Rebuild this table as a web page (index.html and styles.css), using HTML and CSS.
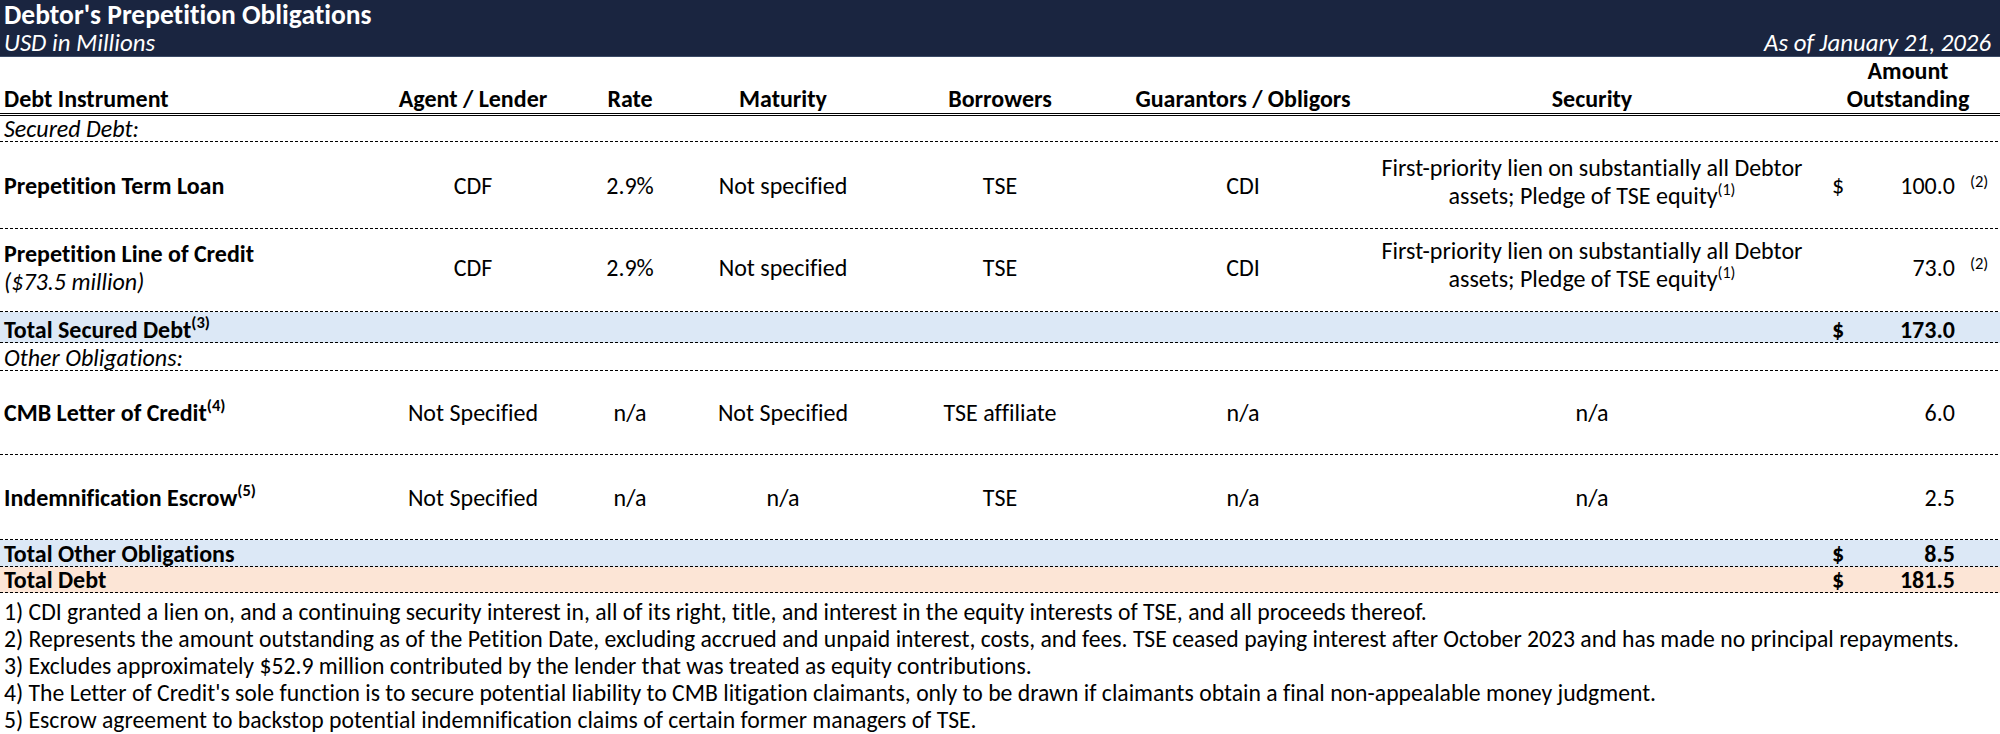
FILE: index.html
```html
<!DOCTYPE html>
<html lang="en">
<head>
<meta charset="utf-8">
<title>Debtor's Prepetition Obligations</title>
<link rel="stylesheet" href="styles.css">
</head>
<body>
<div class="sheet">
  <header class="banner">
    <div class="banner-title">Debtor's Prepetition Obligations</div>
    <div class="banner-sub">
      <span>USD in Millions</span>
      <span>As of January 21, 2026</span>
    </div>
  </header>

  <table class="debt">
    <colgroup>
      <col class="w-name">
      <col class="w-agent">
      <col class="w-rate">
      <col class="w-maturity">
      <col class="w-borrow">
      <col class="w-guar">
      <col class="w-sec">
      <col class="w-cur">
      <col class="w-amt">
      <col class="w-note">
    </colgroup>
    <thead>
      <tr class="row-head">
        <th class="name">Debt Instrument</th>
        <th>Agent / Lender</th>
        <th>Rate</th>
        <th>Maturity</th>
        <th>Borrowers</th>
        <th>Guarantors / Obligors</th>
        <th>Security</th>
        <th colspan="3">Amount<br>Outstanding</th>
      </tr>
    </thead>
    <tbody>
      <tr class="row-label row-label-a">
        <td colspan="10" class="name label">Secured Debt:</td>
      </tr>
      <tr class="row-item row-tall-a">
        <td class="name strong">Prepetition Term Loan</td>
        <td>CDF</td>
        <td>2.9%</td>
        <td>Not specified</td>
        <td>TSE</td>
        <td>CDI</td>
        <td class="security">First-priority lien on substantially all Debtor<br>assets; Pledge of TSE equity<sup class="fn">(1)</sup></td>
        <td class="cur">$</td>
        <td class="amt">100.0</td>
        <td class="note"><sup class="fn">(2)</sup></td>
      </tr>
      <tr class="row-item row-tall-b">
        <td class="name two-line"><span class="strong">Prepetition Line of Credit</span><br><span class="label">($73.5 million)</span></td>
        <td>CDF</td>
        <td>2.9%</td>
        <td>Not specified</td>
        <td>TSE</td>
        <td>CDI</td>
        <td class="security">First-priority lien on substantially all Debtor<br>assets; Pledge of TSE equity<sup class="fn">(1)</sup></td>
        <td class="cur"></td>
        <td class="amt">73.0</td>
        <td class="note"><sup class="fn">(2)</sup></td>
      </tr>
      <tr class="row-total row-total-secured">
        <td colspan="7" class="name strong">Total Secured Debt<sup class="fn fn-bold">(3)</sup></td>
        <td class="cur strong">$</td>
        <td class="amt strong">173.0</td>
        <td class="note"></td>
      </tr>
      <tr class="row-label row-label-b">
        <td colspan="10" class="name label">Other Obligations:</td>
      </tr>
      <tr class="row-item row-mid-a">
        <td class="name strong">CMB Letter of Credit<sup class="fn fn-bold">(4)</sup></td>
        <td>Not Specified</td>
        <td>n/a</td>
        <td>Not Specified</td>
        <td>TSE affiliate</td>
        <td>n/a</td>
        <td>n/a</td>
        <td class="cur"></td>
        <td class="amt">6.0</td>
        <td class="note"></td>
      </tr>
      <tr class="row-item row-mid-b">
        <td class="name strong">Indemnification Escrow<sup class="fn fn-bold">(5)</sup></td>
        <td>Not Specified</td>
        <td>n/a</td>
        <td>n/a</td>
        <td>TSE</td>
        <td>n/a</td>
        <td>n/a</td>
        <td class="cur"></td>
        <td class="amt">2.5</td>
        <td class="note"></td>
      </tr>
      <tr class="row-total row-total-other">
        <td colspan="7" class="name strong">Total Other Obligations</td>
        <td class="cur strong">$</td>
        <td class="amt strong">8.5</td>
        <td class="note"></td>
      </tr>
      <tr class="row-total row-total-debt">
        <td colspan="7" class="name strong">Total Debt</td>
        <td class="cur strong">$</td>
        <td class="amt strong">181.5</td>
        <td class="note"></td>
      </tr>
    </tbody>
  </table>

  <div class="notes">
    <p>1) CDI granted a lien on, and a continuing security interest in, all of its right, title, and interest in the equity interests of TSE, and all proceeds thereof.</p>
    <p>2) Represents the amount outstanding as of the Petition Date, excluding accrued and unpaid interest, costs, and fees. TSE ceased paying interest after October 2023 and has made no principal repayments.</p>
    <p>3) Excludes approximately $52.9 million contributed by the lender that was treated as equity contributions.</p>
    <p>4) The Letter of Credit's sole function is to secure potential liability to CMB litigation claimants, only to be drawn if claimants obtain a final non-appealable money judgment.</p>
    <p>5) Escrow agreement to backstop potential indemnification claims of certain former managers of TSE.</p>
  </div>
</div>
</body>
</html>
```

FILE: styles.css
```css
:root {
  --navy: #1a2540;
  --blue: #dce8f6;
  --peach: #fce5d6;
  --dash: linear-gradient(90deg, #000 0 3px, transparent 3px 5px);
  --base: 24px;
}

* { box-sizing: border-box; }

html, body {
  margin: 0;
  padding: 0;
}

body {
  width: 2000px;
  height: 734px;
  overflow: hidden;
  background: #fff;
  color: #000;
  font-family: Carlito, Calibri, Lato, "Liberation Sans", sans-serif;
  font-size: var(--base);
  font-variant-ligatures: none;
}

.sheet {
  width: 2000px;
}

/* Banner */
.banner {
  height: 57px;
  background: var(--navy);
  color: #fff;
  padding: 0 9px 0 4px;
  display: flex;
  flex-direction: column;
  border-bottom: 1px solid #3b4a66;
}

.banner-title {
  font-weight: 700;
  font-size: 27.5px;
  line-height: 29px;
}

.banner-sub {
  display: flex;
  justify-content: space-between;
  align-items: baseline;
  font-style: italic;
  font-size: 24.8px;
  line-height: 27px;
}

/* Table */
table.debt {
  width: 2000px;
  border-collapse: collapse;
  border-spacing: 0;
  table-layout: fixed;
}

.w-name { width: 370px; }
.w-agent { width: 206px; }
.w-rate { width: 108px; }
.w-maturity { width: 198px; }
.w-borrow { width: 236px; }
.w-guar { width: 250px; }
.w-sec { width: 448px; }
.w-cur { width: 34px; }
.w-amt { width: 110px; }
.w-note { width: 40px; }

th, td {
  padding: 0;
  text-align: center;
  vertical-align: middle;
  white-space: nowrap;
  font-weight: 400;
  line-height: 28px;
  background: transparent;
}

th {
  font-weight: 700;
  vertical-align: bottom;
  padding-bottom: 3px;
}

.name {
  text-align: left;
  padding-left: 4px;
}

.strong { font-weight: 700; }
.label { font-style: italic; }

.cur {
  text-align: left;
  padding-left: 16px;
}

.amt {
  text-align: right;
  padding-right: 5px;
}

.note {
  text-align: left;
  padding-left: 10px;
}

.fn {
  font-size: 16px;
  line-height: 0;
  vertical-align: 9px;
}

.fn-bold {
  font-weight: 700;
  font-size: 16.5px;
  vertical-align: 10px;
}

.note .fn {
  font-size: 16.5px;
  vertical-align: 7px;
}

.security {
  padding-bottom: 8px;
}

/* Rows */
tr {
  background: var(--dash) 0 100% / 5px 1px repeat-x;
}

.row-head {
  height: 59px;
  background:
    linear-gradient(#000, #000) 0 100% / 100% 1px no-repeat,
    linear-gradient(#000, #000) 0 calc(100% - 2px) / 100% 1px no-repeat;
}

.row-label-a { height: 26px; }
.row-label-b { height: 28px; }

.row-label td {
  vertical-align: bottom;
  line-height: 26px;
}

.row-tall-a { height: 87px; }
.row-tall-b { height: 83px; }
.row-tall-b td { padding-bottom: 5px; }
.row-tall-b td.security { padding-bottom: 12px; }
.row-mid-a { height: 84px; }
.row-mid-b { height: 85px; }

.row-total td {
  vertical-align: bottom;
  line-height: 26px;
}

.row-total-secured {
  height: 31px;
  background: var(--dash) 0 100% / 5px 1px repeat-x, var(--blue);
}

.row-total-other {
  height: 27px;
  background: var(--dash) 0 100% / 5px 1px repeat-x, var(--blue);
}

.row-total-debt {
  height: 25px;
  background: var(--dash) 0 100% / 5px 1px repeat-x, var(--peach);
}

/* Footnotes */
.notes {
  padding: 5px 0 0 4px;
}

.notes p {
  margin: 0;
  font-size: 23.7px;
  line-height: 27px;
  white-space: nowrap;
}
```
